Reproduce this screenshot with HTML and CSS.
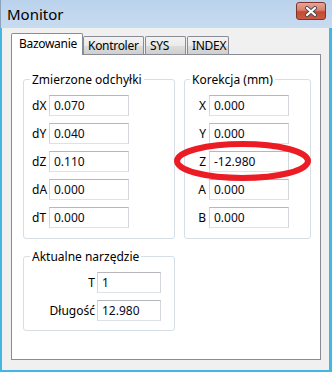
FILE: index.html
```html
<!DOCTYPE html>
<html lang="pl">
<head>
  <meta charset="UTF-8" />
  <title>Monitor</title>
  <link rel="stylesheet" href="styles.css">
</head>
<body>

<div class="window">
  <div class="titlebar">
    <div class="title">Monitor</div>
    <div class="close-btn">
      <svg width="14" height="11" viewBox="0 0 14 11">
        <path d="M3 2 L11 9 M11 2 L3 9" stroke="#4a4a52" stroke-width="4" stroke-linecap="round" />
        <path d="M3 2 L11 9 M11 2 L3 9" stroke="#fff" stroke-width="2.2" stroke-linecap="round" />
      </svg>
    </div>
  </div>

  <div class="client">
    <div class="tabs">
      <div class="tab active">Bazowanie</div>
      <div class="tab tab-kontroler">Kontroler</div>
      <div class="tab tab-sys">SYS</div>
      <div class="tab tab-index">INDEX</div>
    </div>

    <div class="tab-page">
      <div class="groups">
        <div class="group group-left">
          <div class="group-title"><span>Zmierzone odchyłki</span></div>
          <div class="rows">
            <div class="row"><div class="lbl">dX</div><div class="field">0.070</div></div>
            <div class="row"><div class="lbl">dY</div><div class="field">0.040</div></div>
            <div class="row"><div class="lbl">dZ</div><div class="field">0.110</div></div>
            <div class="row"><div class="lbl">dA</div><div class="field">0.000</div></div>
            <div class="row"><div class="lbl">dT</div><div class="field">0.000</div></div>
          </div>
        </div>

        <div class="group group-right">
          <div class="group-title"><span>Korekcja (mm)</span></div>
          <div class="rows">
            <div class="row"><div class="lbl">X</div><div class="field">0.000</div></div>
            <div class="row"><div class="lbl">Y</div><div class="field">0.000</div></div>
            <div class="row"><div class="lbl">Z</div><div class="field">-12.980</div></div>
            <div class="row"><div class="lbl">A</div><div class="field">0.000</div></div>
            <div class="row"><div class="lbl">B</div><div class="field">0.000</div></div>
          </div>
        </div>

        <div class="group group-tool">
          <div class="group-title"><span>Aktualne narzędzie</span></div>
          <div class="rows">
            <div class="row"><div class="lbl">T</div><div class="field">1</div></div>
            <div class="row"><div class="lbl">Długość</div><div class="field">12.980</div></div>
          </div>
        </div>
      </div>
    </div>
  </div>

  <!-- red marker drawn over the Z row -->
  <svg class="highlight" width="143" height="46" viewBox="0 0 143 46">
    <ellipse cx="71.5" cy="23" rx="65.5" ry="17" fill="none" stroke="#ec1c24" stroke-width="6" />
  </svg>
</div>

</body>
</html>
```

FILE: styles.css
```css
* {
  margin: 0; padding: 0; box-sizing: border-box;
}
body {
  background: #fff;
  font-family: "Noto Sans", "Liberation Sans", sans-serif;
  font-size: 12px;
  color: #000;
}
.window {
  position: relative;
  width: 332px;
  height: 372px;
  display: flex;
  flex-direction: column;
  background: #45b5e3;
  padding: 0 3px 2px 2px;
}
.titlebar {
  height: 28px;
  margin: 0 -3px 0 -2px;
  background: linear-gradient(#bad2ec, #c8dcf0);
  border-left: 1px solid #8da3bb;
  display: flex;
  align-items: center;
  justify-content: space-between;
  padding: 0 6px 2px 6px;
}
.title {
  font-size: 15px;
  line-height: 20px;
  margin-top: 2px;
}
.close-btn {
  width: 30px;
  height: 18px;
  margin-top: -4px;
  border: 1px solid #7e3528;
  border-radius: 3px;
  background: linear-gradient(#e7a595, #d9806c 45%, #c24a33 55%, #cd5a40);
  display: flex;
  align-items: center;
  justify-content: center;
}
.client {
  flex: 1;
  background: #f0f0f0;
  padding: 5px 0 0 9px;
}

.tabs {
  display: flex;
  align-items: flex-end;
  height: 21px;
}
.tab {
  height: 18px;
  line-height: 17px;
  padding-left: 4px;
  letter-spacing: -0.3px;
  border: 1px solid #898c95;
  border-bottom: none;
  border-radius: 2px 2px 0 0;
  background: linear-gradient(#f3f3f3, #ebebeb 50%, #dddddd 51%, #cfcfcf);
  white-space: nowrap;
  overflow: hidden;
}
.tab.active {
  position: relative;
  z-index: 1;
  width: 72px;
  height: 22px;
  line-height: 20px;
  margin-bottom: -1px;
  padding-left: 7px;
  background: #fff;
}
.tab-kontroler {
  width: 61px;
}
.tab-sys {
  width: 41px;
  margin-left: 1px;
}
.tab-index {
  width: 42px;
  margin-left: 1px;
}

.tab-page {
  width: 310px;
  height: 306px;
  background: #fff;
  border: 1px solid #898c95;
  padding: 24px 0 0 11px;
}
.groups {
  display: grid;
  grid-template-columns: 152px 127px;
  column-gap: 9px;
  row-gap: 17px;
  align-items: start;
}
.group {
  border: 1px solid #d5dfe5;
  border-radius: 3px;
  padding-bottom: 9px;
}
.group-left, .group-right {
  height: 160px;
}
.group-title {
  height: 15px;
  line-height: 15px;
  margin: -8px 0 0 6px;
}
.group-title span {
  background: #fff;
  padding: 0 2px;
}
.group-right .group-title {
  margin-left: 5px;
}
.rows {
  display: flex;
  flex-direction: column;
  gap: 7px;
  margin-top: 8px;
  padding-left: 8px;
}
.row {
  display: flex;
  align-items: center;
}
.lbl {
  width: 17px;
  white-space: nowrap;
}
.field {
  width: 80px;
  height: 21px;
  line-height: 19px;
  padding-left: 4px;
  border: 1px solid;
  border-color: #b5b7bd #d3d6dc #dde2e8 #d3d6dc;
  color: #0a0a1e;
}
.group-right .lbl {
  width: 16px;
  text-align: right;
  padding-right: 3px;
}
.group-tool .lbl {
  width: 65px;
  text-align: right;
  padding-right: 2px;
}
.group-tool .field {
  width: 64px;
}

.highlight {
  position: absolute;
  left: 171px;
  top: 138px;
}
```
